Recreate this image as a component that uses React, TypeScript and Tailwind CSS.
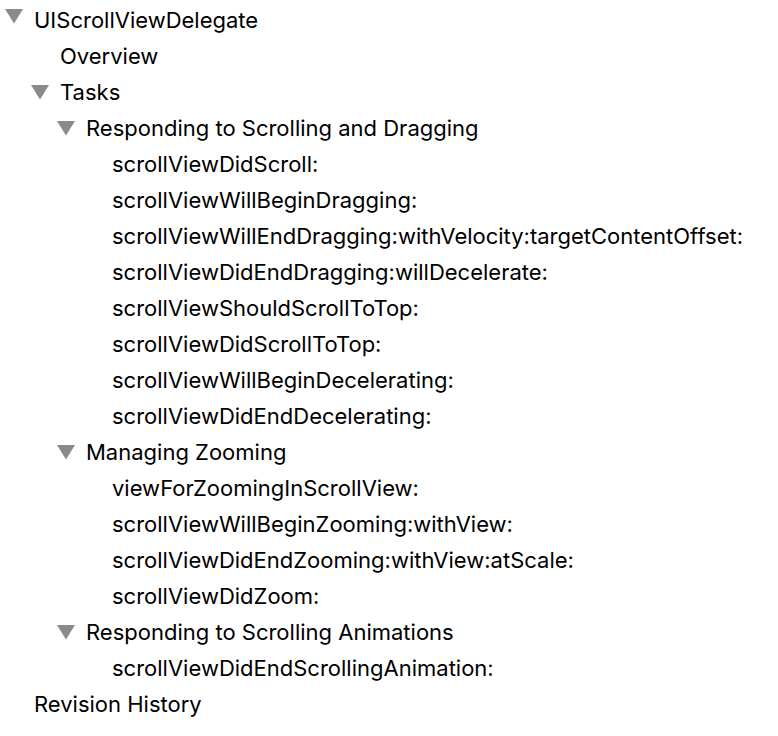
type Item = { label: string; children?: Item[] };

const tree: Item[] = [
  {
    label: "UIScrollViewDelegate",
    children: [
      { label: "Overview" },
      {
        label: "Tasks",
        children: [
          {
            label: "Responding to Scrolling and Dragging",
            children: [
              { label: "scrollViewDidScroll:" },
              { label: "scrollViewWillBeginDragging:" },
              { label: "scrollViewWillEndDragging:withVelocity:targetContentOffset:" },
              { label: "scrollViewDidEndDragging:willDecelerate:" },
              { label: "scrollViewShouldScrollToTop:" },
              { label: "scrollViewDidScrollToTop:" },
              { label: "scrollViewWillBeginDecelerating:" },
              { label: "scrollViewDidEndDecelerating:" },
            ],
          },
          {
            label: "Managing Zooming",
            children: [
              { label: "viewForZoomingInScrollView:" },
              { label: "scrollViewWillBeginZooming:withView:" },
              { label: "scrollViewDidEndZooming:withView:atScale:" },
              { label: "scrollViewDidZoom:" },
            ],
          },
          {
            label: "Responding to Scrolling Animations",
            children: [{ label: "scrollViewDidEndScrollingAnimation:" }],
          },
        ],
      },
    ],
  },
  { label: "Revision History" },
];

function Branch({ items, root = false }: { items: Item[]; root?: boolean }) {
  return (
    <ul>
      {items.map((item) => (
        <li key={item.label}>
          <div className="flex h-9 items-center whitespace-nowrap">
            {item.children ? (
              <button
                type="button"
                aria-label={"Collapse " + item.label}
                aria-expanded="true"
                className={root ? "flex w-[30px] shrink-0 pb-2" : "flex w-[30px] shrink-0"}
              >
                <svg width="20" height="16" viewBox="0 0 20 16" aria-hidden="true">
                  <path d="M1 1H19L10 15.5Z" fill="#8a8a8a" />
                </svg>
              </button>
            ) : (
              <span className="w-[30px] shrink-0" />
            )}
            <a href="#" className="text-black">
              {item.label}
            </a>
          </div>
          {item.children && (
            <div className="pl-[26px]">
              <Branch items={item.children} />
            </div>
          )}
        </li>
      ))}
    </ul>
  );
}

export default function App() {
  return (
    <nav
      aria-label="Contents"
      className="min-h-screen overflow-hidden bg-white pt-0.5 pl-1 font-['Inter',sans-serif] text-[22px] leading-9 text-black"
    >
      <Branch items={tree} root />
    </nav>
  );
}
